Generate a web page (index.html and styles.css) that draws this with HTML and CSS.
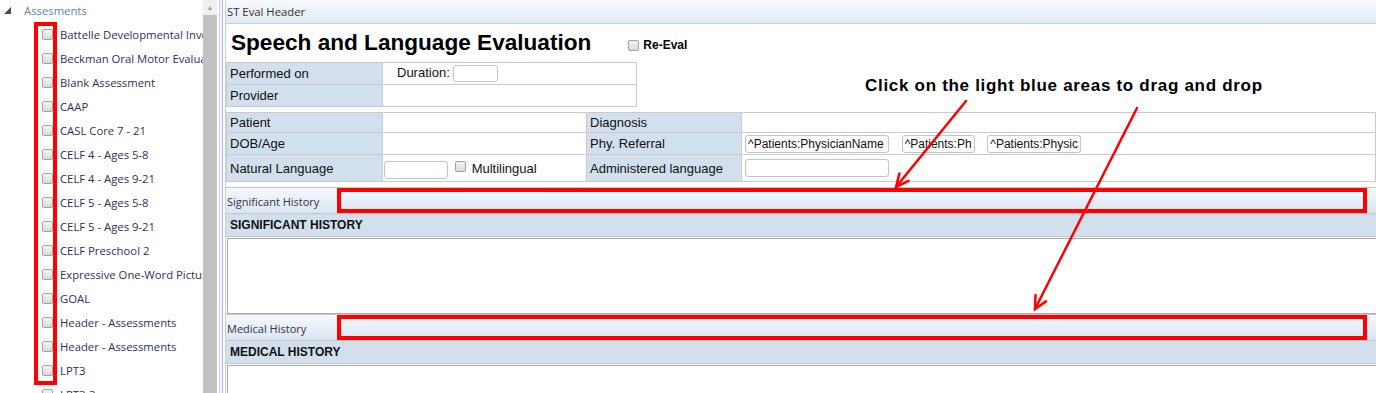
FILE: index.html
```html
<!DOCTYPE html>
<html lang="en">
<head>
    <meta charset="UTF-8">
    <meta name="viewport" content="width=device-width, initial-scale=1.0">
    <title>ST Eval Header</title>
    <link rel="stylesheet" href="styles.css">
</head>
<body>

<div class="app">
    <!-- Assessment tree on the left -->
    <aside class="tree">
        <div class="tree-root">
            <svg class="expander" width="7" height="7" viewBox="0 0 7 7"><polygon points="7,0 7,7 0,7" fill="#4a4a4a"/></svg>
            <span class="root-label">Assesments</span>
        </div>
        <ul class="tree-items">
            <li><input type="checkbox"><span>Battelle Developmental Inventory</span></li>
            <li><input type="checkbox"><span>Beckman Oral Motor Evaluation</span></li>
            <li><input type="checkbox"><span>Blank Assessment</span></li>
            <li><input type="checkbox"><span>CAAP</span></li>
            <li><input type="checkbox"><span>CASL Core 7 - 21</span></li>
            <li><input type="checkbox"><span>CELF 4 - Ages 5-8</span></li>
            <li><input type="checkbox"><span>CELF 4 - Ages 9-21</span></li>
            <li><input type="checkbox"><span>CELF 5 - Ages 5-8</span></li>
            <li><input type="checkbox"><span>CELF 5 - Ages 9-21</span></li>
            <li><input type="checkbox"><span>CELF Preschool 2</span></li>
            <li><input type="checkbox"><span>Expressive One-Word Picture Vocabulary</span></li>
            <li><input type="checkbox"><span>GOAL</span></li>
            <li><input type="checkbox"><span>Header - Assessments</span></li>
            <li><input type="checkbox"><span>Header - Assessments</span></li>
            <li><input type="checkbox"><span>LPT3</span></li>
            <li><input type="checkbox"><span>LPT3-3</span></li>
        </ul>
        <div class="callout-box"></div>
    </aside>

    <div class="vscroll">
        <div class="vscroll-up">&#9650;</div>
        <div class="vscroll-thumb"></div>
    </div>

    <div class="splitter"></div>

    <!-- Evaluation form -->
    <main class="form-pane">
        <div class="pane-header">ST Eval Header</div>

        <div class="title-row">
            <h1>Speech and Language Evaluation</h1>
            <label class="re-eval"><input type="checkbox"> Re-Eval</label>
        </div>

        <table class="grid grid-small">
            <tr>
                <td class="lbl">Performed on</td>
                <td class="val duration">Duration: <input type="text" class="box box-duration"></td>
            </tr>
            <tr>
                <td class="lbl">Provider</td>
                <td class="val"></td>
            </tr>
        </table>

        <table class="grid grid-wide">
            <tr class="row-a">
                <td class="lbl">Patient</td>
                <td class="val col-b"></td>
                <td class="lbl col-c">Diagnosis</td>
                <td class="val"></td>
            </tr>
            <tr class="row-b">
                <td class="lbl">DOB/Age</td>
                <td class="val col-b"></td>
                <td class="lbl col-c">Phy. Referral</td>
                <td class="val refs">
                    <input type="text" class="box box-ref1" value="^Patients:PhysicianName">
                    <input type="text" class="box box-ref2" value="^Patients:PhysicianFax">
                    <input type="text" class="box box-ref3" value="^Patients:PhysicianPhone">
                </td>
            </tr>
            <tr class="row-c">
                <td class="lbl">Natural Language</td>
                <td class="val col-b lang-cell">
                    <input type="text" class="box box-lang">
                    <label class="multi"><input type="checkbox"> Multilingual</label>
                </td>
                <td class="lbl col-c">Administered language</td>
                <td class="val"><input type="text" class="box box-admin"></td>
            </tr>
        </table>

        <section class="history">
            <div class="drop-bar">
                <span class="drop-label">Significant History</span>
                <div class="drop-zone"></div>
            </div>
            <div class="section-head">SIGNIFICANT HISTORY</div>
            <div class="text-box text-box-sig"></div>
        </section>

        <section class="history">
            <div class="drop-bar">
                <span class="drop-label">Medical History</span>
                <div class="drop-zone"></div>
            </div>
            <div class="section-head">MEDICAL HISTORY</div>
            <div class="text-box"></div>
        </section>
    </main>
</div>

<!-- Annotation layer -->
<div class="hint">Click on the light blue areas to drag and drop</div>
<svg class="arrows" width="1376" height="393" viewBox="0 0 1376 393">
    <g stroke="#ff0000" stroke-width="2.5" fill="none" stroke-linecap="round">
        <line x1="966" y1="101" x2="896" y2="187"/>
        <polyline points="908.6,180.9 896,187 899.4,173.4"/>
        <line x1="1137" y1="108" x2="1035" y2="309"/>
        <polyline points="1046,301.4 1035,309 1035.5,295"/>
    </g>
</svg>

</body>
</html>
```

FILE: styles.css
```css
/* Page reset */
body {
    margin: 0;
    background-color: #ffffff;
    font-family: "Liberation Sans", Arial, sans-serif;
    overflow: hidden;
}

.app {
    display: flex;
    height: 393px;
}

/* Left tree */
.tree {
    position: relative;
    width: 203px;
    flex-shrink: 0;
    overflow: hidden;
    font-family: "Open Sans", "Noto Sans", sans-serif;
    font-size: 11.3px;
}

.tree-root {
    display: flex;
    align-items: center;
    height: 21px;
    padding-left: 4px;
}

.expander {
    margin-right: 13px;
}

.root-label {
    color: #5b84bb;
}

.tree-items {
    list-style: none;
    margin: 1px 0 0 0;
    padding: 0;
}

.tree-items li {
    display: flex;
    align-items: center;
    height: 24px;
    padding-left: 42px;
    white-space: nowrap;
    color: #30305c;
}

.tree-items input,
.re-eval input,
.multi input {
    appearance: none;
    width: 11px;
    height: 11px;
    margin: 0 7px 0 0;
    border: 1px solid #a3a3a3;
    border-radius: 2px;
    background: linear-gradient(#f2f2f2, #dadada);
    flex-shrink: 0;
}

/* red marker round the checkboxes */
.callout-box {
    position: absolute;
    left: 34px;
    top: 22px;
    width: 23px;
    height: 363px;
    box-sizing: border-box;
    border: 4px solid #ff0000;
}

/* Fake scrollbar */
.vscroll {
    width: 14px;
    flex-shrink: 0;
    display: flex;
    flex-direction: column;
    background-color: #f0f0f0;
}

.vscroll-up {
    height: 15px;
    font-size: 7px;
    line-height: 15px;
    text-align: center;
    color: #a3a3a3;
}

.vscroll-thumb {
    flex: 1;
    background-color: #c1c1c1;
}

.splitter {
    width: 2px;
    flex-shrink: 0;
    margin-left: 2px;
    margin-right: 2px;
    border-left: 1px solid #c2d2e6;
    border-right: 1px solid #a8bdd7;
    background-color: #f3f6fb;
}

/* Form pane */
.form-pane {
    flex: 1;
    min-width: 0;
    overflow: hidden;
    border-left: 1px solid #c2d2e6;
}

.pane-header {
    height: 23px;
    line-height: 23px;
    padding-left: 1px;
    border-bottom: 1px solid #c3d3e7;
    background: linear-gradient(#f7f9fc, #e2eaf4);
    font-family: "Open Sans", "Noto Sans", sans-serif;
    font-size: 11.3px;
    color: #333333;
}

.title-row {
    display: flex;
    align-items: center;
    height: 38px;
    padding-left: 5px;
}

h1 {
    margin: 0;
    font-size: 22.6px;
    font-weight: bold;
    color: #000000;
}

.re-eval {
    display: flex;
    align-items: center;
    margin-left: 37px;
    margin-top: 4px;
    font-size: 12px;
    font-weight: bold;
}

.re-eval input {
    margin-right: 4px;
}

/* Data grids */
.grid {
    border-collapse: collapse;
    font-size: 13px;
    color: #111111;
}

.grid td {
    border: 1px solid #cbcbcb;
    padding: 0 3px;
    vertical-align: middle;
    white-space: nowrap;
}

.grid td.lbl {
    background-color: #d2dfec;
    width: 149px;
}

.grid-small {
    width: 411px;
}

.grid-small tr {
    height: 22px;
}

.duration {
    padding-left: 14px !important;
}

.grid-wide {
    width: 100%;
    margin-top: 5px;
}

.grid td.col-b {
    width: 197px;
}

.grid td.col-c {
    width: 148px;
}

.grid td.lang-cell {
    padding-left: 1px;
    padding-right: 5px;
}

.row-a {
    height: 20px;
}

.row-b {
    height: 22px;
}

.row-c {
    height: 27px;
}

/* Inputs */
.box {
    box-sizing: border-box;
    height: 18px;
    padding: 0 2px;
    border: 1px solid #b7c7da;
    border-radius: 3px;
    font-family: "Liberation Sans", Arial, sans-serif;
    font-size: 12px;
    color: #111111;
    vertical-align: middle;
}

.box-duration {
    width: 45px;
    height: 17px;
}

.refs .box {
    margin-right: 9px;
}

.box-ref1 {
    width: 144px;
}

.box-ref2 {
    width: 73px;
}

.box-ref3 {
    width: 94px;
}

.box-lang {
    width: 64px;
    margin-top: 4px;
}

.box-admin {
    width: 144px;
}

.multi {
    display: inline-flex;
    align-items: center;
    margin-left: 3px;
    vertical-align: middle;
}

.multi input {
    margin-right: 6px;
    margin-top: -3px;
}

/* History sections */
.history {
    display: flex;
    flex-direction: column;
}

.drop-bar {
    display: flex;
    align-items: stretch;
    height: 25px;
    margin-top: 5px;
    border-top: 1px solid #c6c6c6;
    background: linear-gradient(#f6f9fd, #dbe5f2);
}

.history + .history .drop-bar {
    margin-top: 0;
}

.drop-label {
    width: 110px;
    flex-shrink: 0;
    padding-left: 1px;
    line-height: 27px;
    font-family: "Open Sans", "Noto Sans", sans-serif;
    font-size: 11px;
    color: #333344;
}

.drop-zone {
    flex: 1;
    margin-right: 9px;
    border: 4px solid #ff0000;
}

.section-head {
    height: 22px;
    line-height: 22px;
    padding-left: 4px;
    background-color: #d2dfec;
    border-top: 1px solid #c6c6c6;
    border-bottom: 1px solid #c6c6c6;
    font-size: 12px;
    font-weight: bold;
    color: #111111;
}

.text-box {
    height: 74px;
    margin: 1px -4px 0 1px;
    border: 1px solid #a9a9a9;
    background-color: #ffffff;
}

/* Annotation layer */
.hint {
    position: absolute;
    left: 865px;
    top: 76px;
    font-size: 17px;
    font-weight: bold;
    letter-spacing: 0.7px;
    color: #000000;
}

.arrows {
    position: absolute;
    left: 0;
    top: 0;
    pointer-events: none;
}
```
